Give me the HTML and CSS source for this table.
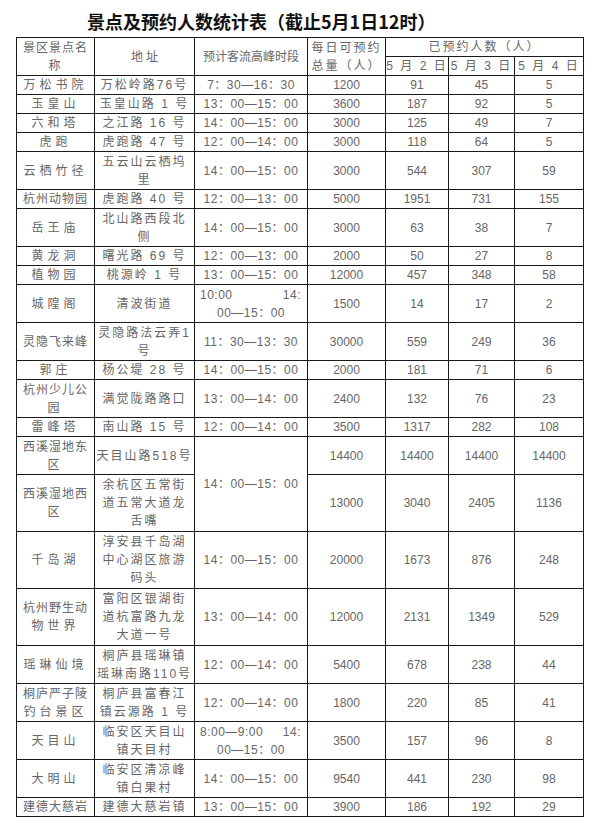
FILE: index.html
```html
<!DOCTYPE html>
<html lang="zh-CN">
<head>
<meta charset="utf-8">
<title>景点及预约人数统计表</title>
<link rel="stylesheet" href="styles.css">
</head>
<body>
<h1 class="title">景点及预约人数统计表（截止5月1日12时）</h1>
<table class="stats">
  <colgroup>
    <col class="w-name"><col class="w-addr"><col class="w-time"><col class="w-total"><col class="w-d1"><col class="w-d2"><col class="w-d3">
  </colgroup>
  <tr class="r1">
    <td rowspan="2" class="hd"><span class="t5">景区景点名</span><br>称</td>
    <td rowspan="2" class="hd wide">地址</td>
    <td rowspan="2" class="hd narrow">预计客流高峰时段</td>
    <td rowspan="2" class="hd">每日可预约<br>总量（人）</td>
    <td colspan="3" class="hd">已预约人数（人）</td>
  </tr>
  <tr class="r1">
    <td class="hd">5 月 2 日</td><td class="hd">5 月 3 日</td><td class="hd">5 月 4 日</td>
  </tr>
  <tr class="r1"><td class="nm">万松书院</td><td class="ad">万松岭路76号</td><td class="tm">7：30—16：30</td><td>1200</td><td>91</td><td>45</td><td>5</td></tr>
  <tr class="r1"><td class="nm">玉皇山</td><td class="ad">玉皇山路 1 号</td><td class="tm">13：00—15：00</td><td>3600</td><td>187</td><td>92</td><td>5</td></tr>
  <tr class="r1"><td class="nm">六和塔</td><td class="ad">之江路 16 号</td><td class="tm">14：00—15：00</td><td>3000</td><td>125</td><td>49</td><td>7</td></tr>
  <tr class="r1"><td class="nm">虎跑</td><td class="ad">虎跑路 47 号</td><td class="tm">12：00—14：00</td><td>3000</td><td>118</td><td>64</td><td>5</td></tr>
  <tr class="r2"><td class="nm">云栖竹径</td><td class="ad">五云山云栖坞<br>里</td><td class="tm">14：00—15：00</td><td>3000</td><td>544</td><td>307</td><td>59</td></tr>
  <tr class="r1"><td class="nm"><span class="t5">杭州动物园</span></td><td class="ad">虎跑路 40 号</td><td class="tm">12：00—13：00</td><td>5000</td><td>1951</td><td>731</td><td>155</td></tr>
  <tr class="r2"><td class="nm">岳王庙</td><td class="ad">北山路西段北<br>侧</td><td class="tm">14：00—15：00</td><td>3000</td><td>63</td><td>38</td><td>7</td></tr>
  <tr class="r1"><td class="nm">黄龙洞</td><td class="ad">曙光路 69 号</td><td class="tm">12：00—13：00</td><td>2000</td><td>50</td><td>27</td><td>8</td></tr>
  <tr class="r1"><td class="nm">植物园</td><td class="ad">桃源岭 1 号</td><td class="tm">13：00—15：00</td><td>12000</td><td>457</td><td>348</td><td>58</td></tr>
  <tr class="r2"><td class="nm">城隍阁</td><td class="ad">清波街道</td><td class="tm"><span class="jl"><span>10:00</span><span>14:</span></span>00—15：00</td><td>1500</td><td>14</td><td>17</td><td>2</td></tr>
  <tr class="r2"><td class="nm"><span class="t5">灵隐飞来峰</span></td><td class="ad">灵隐路法云弄1<br>号</td><td class="tm">11：30—13：30</td><td>30000</td><td>559</td><td>249</td><td>36</td></tr>
  <tr class="r1"><td class="nm">郭庄</td><td class="ad">杨公堤 28 号</td><td class="tm">14：00—15：00</td><td>2000</td><td>181</td><td>71</td><td>6</td></tr>
  <tr class="r2"><td class="nm"><span class="t5">杭州少儿公</span><br>园</td><td class="ad">满觉陇路路口</td><td class="tm">13：00—14：00</td><td>2400</td><td>132</td><td>76</td><td>23</td></tr>
  <tr class="r1"><td class="nm">雷峰塔</td><td class="ad">南山路 15 号</td><td class="tm">12：00—14：00</td><td>3500</td><td>1317</td><td>282</td><td>108</td></tr>
  <tr class="r2"><td class="nm"><span class="t5">西溪湿地东</span><br>区</td><td class="ad">天目山路518号</td><td class="tm" rowspan="2">14：00—15：00</td><td>14400</td><td>14400</td><td>14400</td><td>14400</td></tr>
  <tr class="r3"><td class="nm"><span class="t5">西溪湿地西</span><br>区</td><td class="ad">余杭区五常街<br>道五常大道龙<br>舌嘴</td><td>13000</td><td>3040</td><td>2405</td><td>1136</td></tr>
  <tr class="r3"><td class="nm">千岛湖</td><td class="ad">淳安县千岛湖<br>中心湖区旅游<br>码头</td><td class="tm">14：00—15：00</td><td>20000</td><td>1673</td><td>876</td><td>248</td></tr>
  <tr class="r3"><td class="nm"><span class="t5">杭州野生动</span><br>物世界</td><td class="ad">富阳区银湖街<br>道杭富路九龙<br>大道一号</td><td class="tm">13：00—14：00</td><td>12000</td><td>2131</td><td>1349</td><td>529</td></tr>
  <tr class="r2"><td class="nm">瑶琳仙境</td><td class="ad">桐庐县瑶琳镇<br>瑶琳南路110号</td><td class="tm">12：00—14：00</td><td>5400</td><td>678</td><td>238</td><td>44</td></tr>
  <tr class="r2"><td class="nm"><span class="t5">桐庐严子陵</span><br>钓台景区</td><td class="ad">桐庐县富春江<br>镇云源路 1 号</td><td class="tm">12：00—14：00</td><td>1800</td><td>220</td><td>85</td><td>41</td></tr>
  <tr class="r2"><td class="nm">天目山</td><td class="ad">临安区天目山<br>镇天目村</td><td class="tm"><span class="jl"><span>8:00—9:00</span><span>14:</span></span>00—15：00</td><td>3500</td><td>157</td><td>96</td><td>8</td></tr>
  <tr class="r2"><td class="nm">大明山</td><td class="ad">临安区清凉峰<br>镇白果村</td><td class="tm">14：00—15：00</td><td>9540</td><td>441</td><td>230</td><td>98</td></tr>
  <tr class="r1"><td class="nm"><span class="t5">建德大慈岩</span></td><td class="ad">建德大慈岩镇</td><td class="tm">13：00—15：00</td><td>3900</td><td>186</td><td>192</td><td>29</td></tr>
</table>
</body>
</html>
```

FILE: styles.css
```css
* { box-sizing: border-box; }

body {
  margin: 0;
  padding: 9px 0 0 16px;
  background: #ffffff;
  font-family: "Liberation Sans", "Noto Sans CJK SC", sans-serif;
  color: #666666;
}

.title {
  margin: 0 0 4px 71px;
  font-family: "Noto Sans CJK SC", sans-serif;
  font-size: 18px;
  line-height: 24px;
  font-weight: 700;
  color: #111111;
  white-space: nowrap;
}

.stats {
  border-collapse: collapse;
  table-layout: fixed;
  width: 568px;
  font-size: 12px;
  line-height: 18px;
}

.w-name { width: 78px; }
.w-addr { width: 100px; }
.w-time { width: 113px; }
.w-total { width: 78px; }
.w-d1 { width: 63px; }
.w-d2 { width: 66px; }
.w-d3 { width: 69px; }

.stats td {
  border: 1px solid #1a1a1a;
  padding: 0;
  text-align: center;
  vertical-align: middle;
  white-space: nowrap;
}

.r1 { height: 19px; }
.r2 { height: 38px; }
.r3 { height: 57px; }

.hd { letter-spacing: 2px; padding-left: 2px; }
.hd.wide { letter-spacing: 3px; padding-left: 3px; }
.hd.narrow { letter-spacing: 0; padding-left: 0; }
.hd .t5 { letter-spacing: 1px; }

.nm { letter-spacing: 4px; padding-left: 4px; }
.nm .t5 { letter-spacing: 1px; }

.ad { letter-spacing: 2px; padding-left: 2px; }

.tm { letter-spacing: 0.5px; }

.jl {
  display: flex;
  justify-content: space-between;
  padding: 0 6px 0 5px;
}
```
